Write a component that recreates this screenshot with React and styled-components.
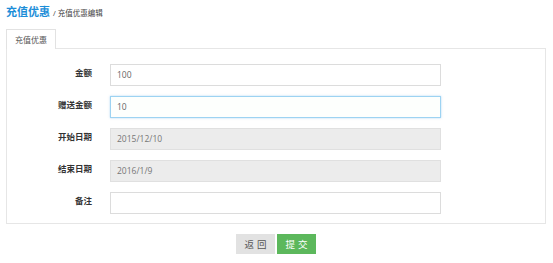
import React from "react";
import styled, { createGlobalStyle } from "styled-components";

const Global = createGlobalStyle`
  body {
    margin: 0;
    background: #fff;
    font-family: "Open Sans", "Noto Sans CJK SC", sans-serif;
  }
`;

const Page = styled.div`
  padding: 5px 7px 0 6px;
`;

const Header = styled.div`
  display: flex;
  align-items: baseline;
  height: 14px;
  line-height: 14px;
  margin-bottom: 10px;
`;

const Title = styled.span`
  color: #1d8ed8;
  font-size: 11px;
  font-weight: 700;
`;

const Crumb = styled.span`
  color: #444;
  font-size: 7.5px;
  margin-left: 3px;
`;

const Tabs = styled.div`
  display: flex;
`;

const Tab = styled.div`
  height: 19px;
  line-height: 19px;
  padding: 0 8px;
  font-size: 8px;
  color: #555;
  background: #fff;
  border: 1px solid #e2e2e2;
  border-bottom: none;
  margin-bottom: -1px;
  position: relative;
`;

const Panel = styled.div`
  border: 1px solid #e6e6e6;
  padding: 15px 0 9px;
  display: flex;
  flex-direction: column;
  gap: 10px;
`;

const Row = styled.div`
  display: grid;
  grid-template-columns: 85px 331px;
  column-gap: 18px;
  align-items: center;
`;

const Label = styled.label`
  text-align: right;
  font-size: 8.5px;
  font-weight: 700;
  color: #333;
  margin-top: -6px;
`;

const Input = styled.div`
  box-sizing: border-box;
  height: 22px;
  line-height: 20px;
  padding: 0 6px;
  font-size: 8.5px;
  color: ${(p) => (p.disabled ? "#777" : "#666")};
  background: ${(p) => (p.disabled ? "#ececec" : p.focus ? "#fdfffd" : "#fff")};
  border: 1px solid ${(p) => (p.focus ? "#9dd3f2" : p.disabled ? "#e0e0e0" : "#dcdcdc")};
  box-shadow: ${(p) => (p.focus ? "0 0 2px rgba(102,175,233,0.5)" : "none")};
`;

const Actions = styled.div`
  display: flex;
  justify-content: center;
  gap: 2px;
  margin-top: 10px;
`;

const Button = styled.button`
  width: 39px;
  height: 20px;
  border: none;
  padding: 0;
  font-family: inherit;
  font-size: 9.5px;
  letter-spacing: 3px;
  text-indent: 3px;
  color: ${(p) => (p.primary ? "#fff" : "#555")};
  background: ${(p) => (p.primary ? "#5cb85c" : "#e2e2e2")};
`;

const fields = [
  { label: "金额", value: "100" },
  { label: "赠送金额", value: "10", focus: true },
  { label: "开始日期", value: "2015/12/10", disabled: true },
  { label: "结束日期", value: "2016/1/9", disabled: true },
  { label: "备注", value: "" },
];

export default function App() {
  return (
    <Page>
      <Global />
      <Header>
        <Title>充值优惠</Title>
        <Crumb>/ 充值优惠编辑</Crumb>
      </Header>
      <Tabs>
        <Tab>充值优惠</Tab>
      </Tabs>
      <Panel>
        {fields.map((f) => (
          <Row key={f.label}>
            <Label>{f.label}</Label>
            <Input disabled={f.disabled} focus={f.focus}>{f.value}</Input>
          </Row>
        ))}
      </Panel>
      <Actions>
        <Button>返回</Button>
        <Button primary>提交</Button>
      </Actions>
    </Page>
  );
}
